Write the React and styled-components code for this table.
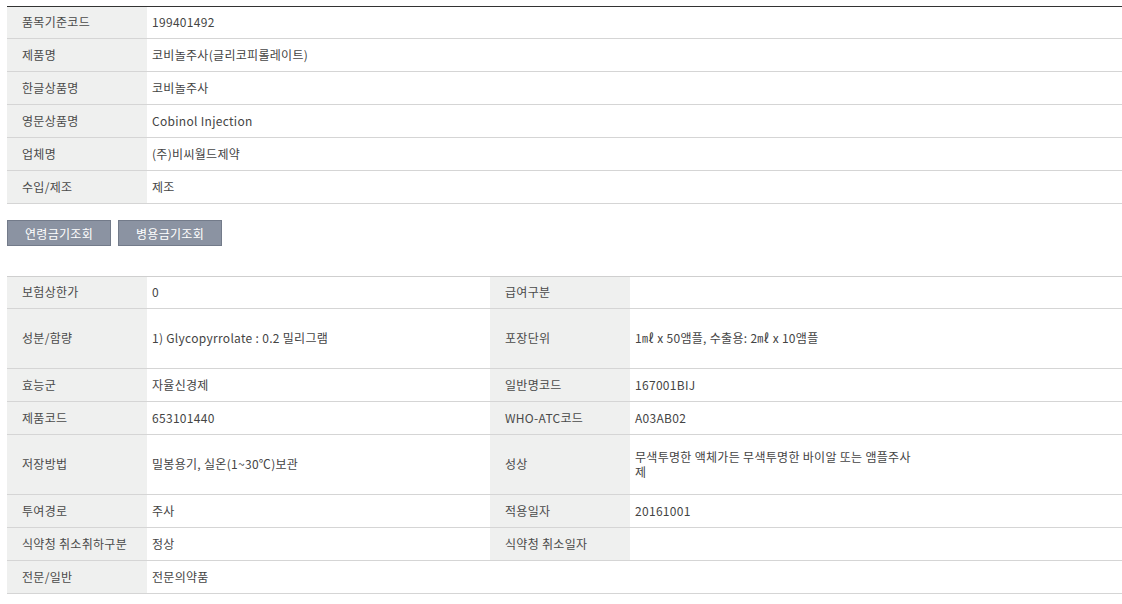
import React from "react";
import styled, { createGlobalStyle } from "styled-components";

const GlobalStyle = createGlobalStyle`
  body {
    margin: 0;
    background: #fff;
    font-family: "Noto Sans CJK KR", "Noto Sans", sans-serif;
    font-size: 12px;
    color: #444;
  }
`;

const Page = styled.div`
  padding: 6px 0 0 7px;
`;

const Table = styled.table`
  width: 100%;
  border-collapse: collapse;
  table-layout: fixed;
  border-top: 1px solid ${(props) => (props.dark ? "#333" : "#cfcfcf")};
`;

const Row = styled.tr`
  height: ${(props) => (props.tall ? "60px" : "33px")};
  border-bottom: 1px solid #d5d5d5;
  &:first-child {
    height: ${(props) => (props.tall ? "59px" : "32px")};
  }
`;

const Head = styled.th`
  background-color: #eff0ef;
  font-weight: normal;
  text-align: left;
  padding: 0 0 2px 15px;
  color: #4a4a4a;
  white-space: nowrap;
  letter-spacing: 0.3px;
`;

const Cell = styled.td`
  padding: 0 0 2px 5px;
  color: #444;
  vertical-align: middle;
  letter-spacing: 0.3px;
`;

const Wrap = styled.div`
  max-width: 282px;
  line-height: 15px;
`;

const ButtonRow = styled.div`
  display: flex;
  gap: 7px;
  margin: 16px 0 30px;
`;

const Button = styled.button`
  width: 104px;
  height: 26px;
  background-color: #8b93a2;
  border: 1px solid #737b8a;
  color: #fff;
  font-family: inherit;
  font-size: 12px;
  letter-spacing: 0.3px;
  padding: 0;
  cursor: pointer;
`;

const basicRows = [
  ["품목기준코드", "199401492"],
  ["제품명", "코비놀주사(글리코피롤레이트)"],
  ["한글상품명", "코비놀주사"],
  ["영문상품명", "Cobinol Injection"],
  ["업체명", "(주)비씨월드제약"],
  ["수입/제조", "제조"],
];

const detailRows = [
  { cells: ["보험상한가", "0", "급여구분", ""] },
  {
    tall: true,
    cells: [
      "성분/함량",
      "1) Glycopyrrolate : 0.2 밀리그램",
      "포장단위",
      "1㎖ x 50앰플, 수출용: 2㎖ x 10앰플",
    ],
  },
  { cells: ["효능군", "자율신경제", "일반명코드", "167001BIJ"] },
  { cells: ["제품코드", "653101440", "WHO-ATC코드", "A03AB02"] },
  {
    tall: true,
    cells: [
      "저장방법",
      "밀봉용기, 실온(1~30℃)보관",
      "성상",
      "무색투명한 액체가든 무색투명한 바이알 또는 앰플주사제",
    ],
  },
  { cells: ["투여경로", "주사", "적용일자", "20161001"] },
  { cells: ["식약청 취소취하구분", "정상", "식약청 취소일자", ""] },
  { cells: ["전문/일반", "전문의약품", null, null] },
];

export default function App() {
  return (
    <Page>
      <GlobalStyle />
      <Table dark>
        <colgroup>
          <col style={{ width: 140 }} />
          <col />
        </colgroup>
        <tbody>
          {basicRows.map(([label, value], index) => (
            <Row key={index}>
              <Head>{label}</Head>
              <Cell>{value}</Cell>
            </Row>
          ))}
        </tbody>
      </Table>
      <ButtonRow>
        <Button>연령금기조회</Button>
        <Button>병용금기조회</Button>
      </ButtonRow>
      <Table>
        <colgroup>
          <col style={{ width: 140 }} />
          <col style={{ width: 343 }} />
          <col style={{ width: 140 }} />
          <col />
        </colgroup>
        <tbody>
          {detailRows.map((row, index) => (
            <Row key={index} tall={row.tall}>
              <Head>{row.cells[0]}</Head>
              <Cell>{row.cells[1]}</Cell>
              {row.cells[2] === null ? (
                <Cell colSpan={2} />
              ) : (
                <>
                  <Head>{row.cells[2]}</Head>
                  <Cell>
                    <Wrap>{row.cells[3]}</Wrap>
                  </Cell>
                </>
              )}
            </Row>
          ))}
        </tbody>
      </Table>
    </Page>
  );
}
